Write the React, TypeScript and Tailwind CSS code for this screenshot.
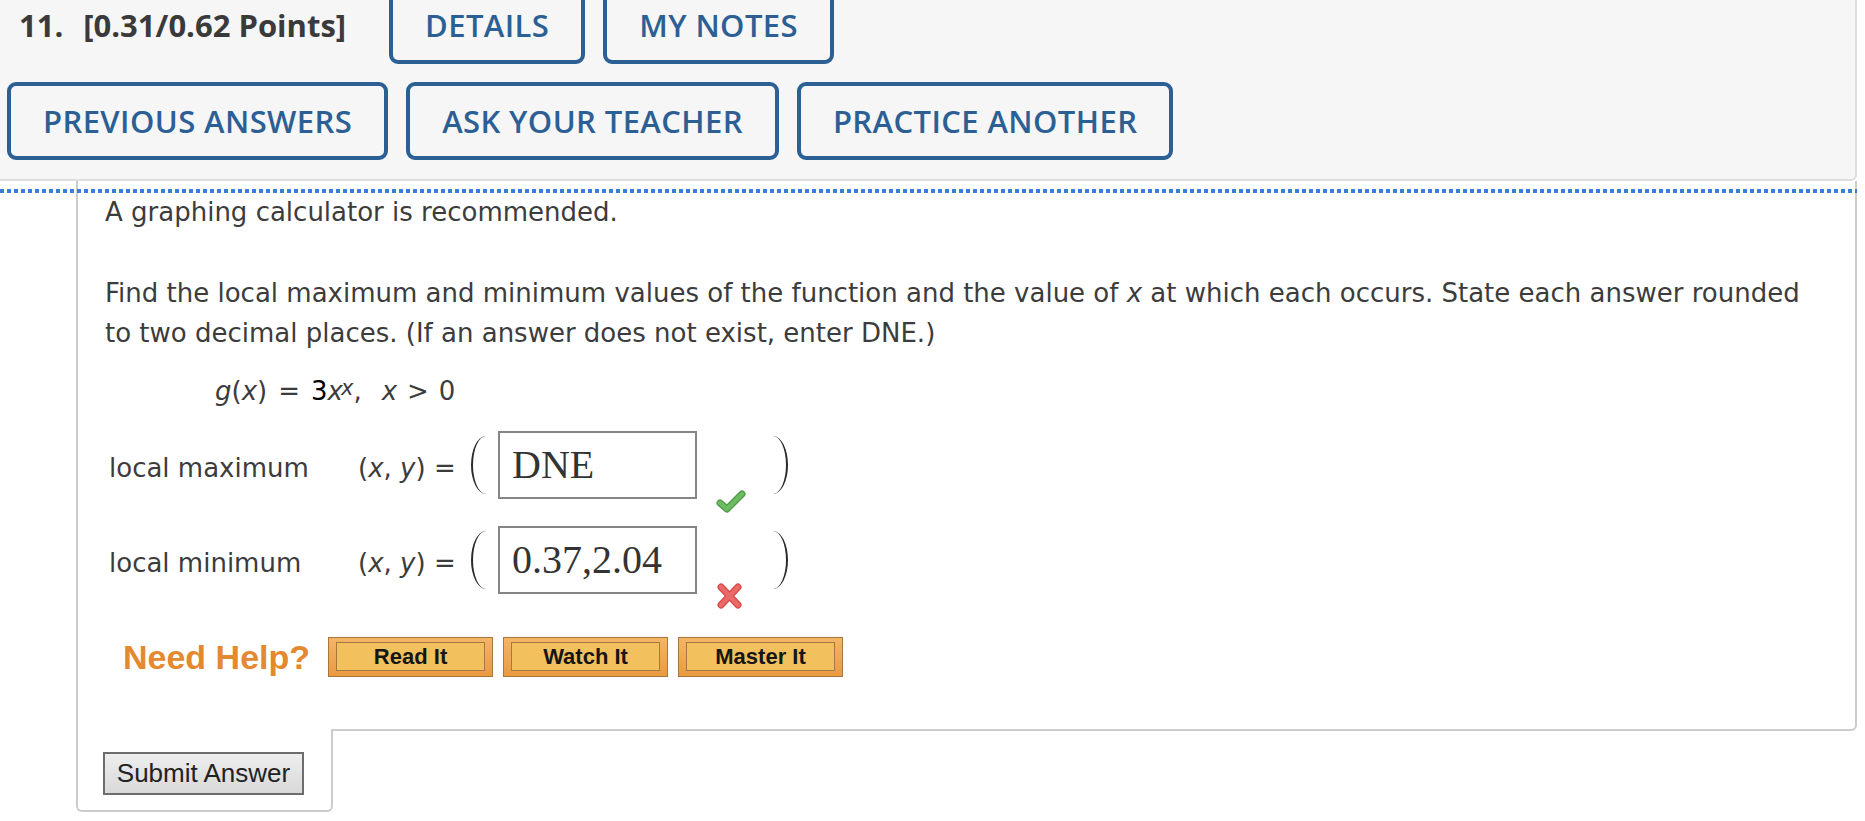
import React from 'react';
import clsx from 'clsx';

const blueBtn =
  "h-[78px] px-8 border-[4px] border-[#2c6094] rounded-[9px] text-[#2c6094] text-[31px] font-semibold tracking-[0.4px] flex items-center justify-center whitespace-nowrap bg-[#f6f6f6]";

function HeaderButton({ label }: { label: string }) {
  return <button className={blueBtn}>{label}</button>;
}

function Paren({ side, className }: { side: 'left' | 'right'; className?: string }) {
  return (
    <div
      className={clsx(
        "w-[15px] h-[58px] overflow-hidden flex shrink-0",
        side === 'right' ? "justify-end" : "justify-start",
        className
      )}
    >
      <div
        className={clsx(
          "shrink-0 w-[30px] h-full rounded-[50%] border-[#2a2a2a]",
          side === 'right' ? "border-r-2" : "border-l-2"
        )}
      />
    </div>
  );
}

function CheckMark() {
  return (
    <svg width="30" height="23" viewBox="0 0 30 23">
      <path d="M4 13 L11 19 L26 4" fill="none" stroke="#4e9a47" strokeWidth="7" strokeLinecap="round" strokeLinejoin="round" />
      <path d="M4 13 L11 19 L26 4" fill="none" stroke="#6dbb63" strokeWidth="4.5" strokeLinecap="round" strokeLinejoin="round" />
    </svg>
  );
}

function CrossMark() {
  return (
    <svg width="27" height="26" viewBox="0 0 27 26">
      <path d="M5 4 L22 22 M22 4 L5 22" fill="none" stroke="#d94848" strokeWidth="7" strokeLinecap="round" />
      <path d="M5 4 L22 22 M22 4 L5 22" fill="none" stroke="#ea6a6a" strokeWidth="4.5" strokeLinecap="round" />
    </svg>
  );
}

function AnswerRow({
  label,
  value,
  correct,
  className,
}: {
  label: string;
  value: string;
  correct: boolean;
  className?: string;
}) {
  return (
    <div className={clsx("flex items-center h-[68px] pl-[4px]", className)}>
      <span className="w-[249px] shrink-0 mt-[6px]">{label}</span>
      <span className="w-[98px] shrink-0 mt-[6px] whitespace-nowrap">
        (<i>x</i>, <i>y</i>) =
      </span>
      <Paren side="left" className="ml-[15px]" />
      <div className="ml-[12px] w-[199px] h-[68px] shrink-0 border-2 border-[#858585] bg-white flex items-center pl-[12px] font-['Liberation_Serif',serif] text-[40px] text-[#333333] leading-none">
        {value}
      </div>
      <div className={clsx("ml-[19px] w-[30px] shrink-0 self-end", correct ? "-mb-[14px]" : "-mb-[15px]")}>
        {correct ? <CheckMark /> : <CrossMark />}
      </div>
      <Paren side="right" className="ml-[27px]" />
    </div>
  );
}

function HelpButton({ label }: { label: string }) {
  return (
    <button className="w-[165px] h-[40px] border border-[#a8763a] bg-linear-to-b from-[#f4b567] to-[#e99a40] pt-[4px] pb-[5px] px-[7px] flex">
      <span className="flex-1 border border-[#a47a40] bg-[#f2c05c] flex items-center justify-center font-['Liberation_Sans',Arial,sans-serif] font-bold text-[22px] text-[#161616]">
        {label}
      </span>
    </button>
  );
}

export default function App() {
  return (
    <div className="relative w-[1865px] min-h-[821px] bg-white overflow-hidden">
      {/* header */}
      <div className="w-[1857px] bg-[#f6f6f6] border-r-2 border-b-2 border-[#dedede] rounded-br-[6px] pl-[7px] pb-[19px] font-['Open_Sans',sans-serif]">
        <div className="-mt-[14px] flex items-center">
          <span className="ml-[12px] text-[31px] font-bold text-[#3a3a3a]">11.</span>
          <span className="ml-[20px] text-[31px] font-bold text-[#3a3a3a]">[0.31/0.62 Points]</span>
          <div className="ml-[43px] flex gap-[18px]">
            <HeaderButton label="DETAILS" />
            <HeaderButton label="MY NOTES" />
          </div>
        </div>
        <div className="mt-[18px] flex gap-[18px]">
          <HeaderButton label="PREVIOUS ANSWERS" />
          <HeaderButton label="ASK YOUR TEACHER" />
          <HeaderButton label="PRACTICE ANOTHER" />
        </div>
      </div>

      {/* question panel */}
      <div className="relative ml-[76px] w-[1781px] border-l-2 border-r-2 border-b-2 border-[#cccccc] rounded-br-[6px] pt-[11px] pl-[27px] pb-[52px] font-['DejaVu_Sans',Verdana,sans-serif] text-[26px] leading-[40px] text-[#3c3c3c]">
        <p>A graphing calculator is recommended.</p>
        <p className="mt-[41px] whitespace-nowrap">
          Find the local maximum and minimum values of the function and the value of <i>x</i> at which each occurs. State each answer rounded
          <br />
          to two decimal places. (If an answer does not exist, enter DNE.)
        </p>
        <div className="mt-[15px] ml-[110px] whitespace-nowrap">
          <i>g</i>(<i>x</i>)<span className="ml-[11px] mr-[11px]">=</span>
          <span className="text-black">3</span>
          <i>x</i>
          <i className="-ml-[2px] text-[21px] align-[5px]">x</i>,<span className="ml-[20px]" />
          <i>x</i>
          <span className="ml-[10px] mr-[10px]">&gt;</span>0
        </div>

        <AnswerRow className="mt-[20px]" label="local maximum" value="DNE" correct />
        <AnswerRow className="mt-[27px]" label="local minimum" value="0.37,2.04" correct={false} />

        <div className="mt-[43px] h-[40px] flex items-center pl-[18px]">
          <span className="font-['Liberation_Sans',Arial,sans-serif] font-bold text-[34px] leading-none text-[#e4892f] mr-[18px]">
            Need Help?
          </span>
          <div className="flex gap-[10px]">
            <HelpButton label="Read It" />
            <HelpButton label="Watch It" />
            <HelpButton label="Master It" />
          </div>
        </div>
      </div>

      {/* submit tab */}
      <div className="relative ml-[76px] w-[257px] -mt-[2px] bg-white border-l-2 border-r-2 border-b-2 border-[#cccccc] rounded-b-[6px] pt-[23px] pb-[15px] pl-[25px]">
        <button className="w-[201px] h-[43px] border-2 border-[#6d6d6d] bg-linear-to-b from-[#eeeeee] to-[#d9d9d9] font-['Liberation_Sans',Arial,sans-serif] text-[26px] text-[#222222]">
          Submit Answer
        </button>
      </div>

      {/* focus outline */}
      <div className="absolute top-[189px] left-0 w-[1857px] h-[4px] bg-[repeating-linear-gradient(90deg,#3b7ddd_0px,#3b7ddd_4px,transparent_4px,transparent_7px)]" />
    </div>
  );
}
